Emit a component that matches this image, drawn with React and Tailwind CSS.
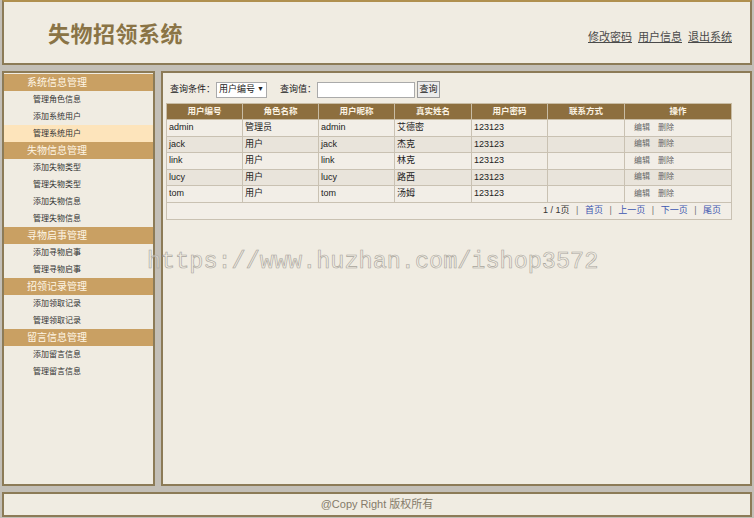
import React from 'react';

const MENU = [
  { title: '系统信息管理', items: ['管理角色信息', '添加系统用户', '管理系统用户'] },
  { title: '失物信息管理', items: ['添加失物类型', '管理失物类型', '添加失物信息', '管理失物信息'] },
  { title: '寻物启事管理', items: ['添加寻物启事', '管理寻物启事'] },
  { title: '招领记录管理', items: ['添加领取记录', '管理领取记录'] },
  { title: '留言信息管理', items: ['添加留言信息', '管理留言信息'] },
];

const COLS = ['用户编号', '角色名称', '用户昵称', '真实姓名', '用户密码', '联系方式', '操作'];

const USERS = [
  ['admin', '管理员', 'admin', '艾德密', '123123'],
  ['jack', '用户', 'jack', '杰克', '123123'],
  ['link', '用户', 'link', '林克', '123123'],
  ['lucy', '用户', 'lucy', '路西', '123123'],
  ['tom', '用户', 'tom', '汤姆', '123123'],
];

const font = "font-['Liberation_Sans','Noto_Sans_CJK_SC',sans-serif]";

function Sidebar() {
  return (
    <div className="w-[153px] shrink-0 border-2 border-[#8c7b57] bg-[#f0ece2] pt-px">
      {MENU.map((group) => (
        <div key={group.title}>
          <div className="h-[17px] bg-[#c9a063] pl-[23px] text-[10px] leading-[17px] text-[#fff6e6]">
            {group.title}
          </div>
          {group.items.map((item) => (
            <div
              key={item}
              className={`h-[17px] pl-[29px] text-[8px] leading-[17px] text-[#333] ${
                item === '管理系统用户' ? 'bg-[#fde4bb]' : ''
              }`}
            >
              {item}
            </div>
          ))}
        </div>
      ))}
    </div>
  );
}

function Sep() {
  return <span className="mx-[6.5px] text-[#777]">|</span>;
}

function UserTable() {
  return (
    <table className="w-[565px] table-fixed border-collapse text-[9px] text-[#222]">
      <colgroup>
        <col className="w-[76px]" />
        <col className="w-[76px]" />
        <col className="w-[76px]" />
        <col className="w-[77px]" />
        <col className="w-[76px]" />
        <col className="w-[77px]" />
        <col className="w-[107px]" />
      </colgroup>
      <thead>
        <tr className="h-[16px] bg-[#8d6f3f]">
          {COLS.map((c) => (
            <th key={c} className="border border-[#c8bca4] p-0 text-center text-[8.5px] font-bold text-[#fbf3e3]">
              {c}
            </th>
          ))}
        </tr>
      </thead>
      <tbody>
        {USERS.map((row, i) => (
          <tr key={row[0]} className={`h-[16.5px] ${i % 2 ? 'bg-[#e9e4db]' : 'bg-[#f2eee7]'}`}>
            {row.map((cell, j) => (
              <td key={j} className="border border-[#c9c1b2] px-[2px] py-0 text-left">
                {cell}
              </td>
            ))}
            <td className="border border-[#c9c1b2] px-[2px] py-0" />
            <td className="border border-[#c9c1b2] py-0 pl-[9px] text-[8px] text-[#666]">
              <span>编辑</span>
              <span className="ml-[8px]">删除</span>
            </td>
          </tr>
        ))}
        <tr className="h-[17px] bg-[#f2eee7]">
          <td colSpan={7} className="border border-[#c9c1b2] p-0 pr-[10px] text-right text-[9px] text-[#333]">
            1 / 1页
            <Sep />
            <a className="text-[#3d56b0]">首页</a>
            <Sep />
            <a className="text-[#3d56b0]">上一页</a>
            <Sep />
            <a className="text-[#3d56b0]">下一页</a>
            <Sep />
            <a className="text-[#3d56b0]">尾页</a>
          </td>
        </tr>
      </tbody>
    </table>
  );
}

export default function App() {
  return (
    <div className={`relative h-[518px] w-[754px] overflow-hidden bg-[#c3bfb7] px-[2px] ${font}`}>
      {/* header */}
      <div className="flex h-[65px] items-center justify-between border-2 border-[#8c7b57] border-t-[#b0904f] bg-[#f0ece2]">
        <h1 className="ml-[44px] mt-[3px] text-[22px] font-bold tracking-[0.5px] text-[#8a7446]">失物招领系统</h1>
        <div className="mr-[18px] mt-[9px] flex gap-[6px] text-[11px] text-[#4a4a4a]">
          <a className="underline">修改密码</a>
          <a className="underline">用户信息</a>
          <a className="underline">退出系统</a>
        </div>
      </div>

      {/* body */}
      <div className="mt-[6px] flex h-[415px] gap-[6px]">
        <Sidebar />
        <div className="flex-1 border-2 border-[#8c7b57] bg-[#f0ece2] px-[3px] pt-[8px]">
          <div className="ml-[4px] flex h-[17px] items-center text-[9px] text-[#222]">
            <span>查询条件：</span>
            <div className="ml-[1px] flex h-[16px] w-[51px] items-center justify-between border border-[#aaa] bg-white px-[2px]">
              <span>用户编号</span>
              <span className="text-[7px]">▼</span>
            </div>
            <span className="ml-[13px]">查询值：</span>
            <div className="ml-[1px] h-[16px] w-[98px] border border-[#aaa] bg-white" />
            <div className="ml-[2px] flex h-[17px] w-[23px] items-center justify-center border border-[#999] bg-[#ebebeb]">
              查询
            </div>
          </div>
          <div className="mt-[5px]">
            <UserTable />
          </div>
        </div>
      </div>

      {/* footer */}
      <div className="mt-[6px] flex h-[25px] items-center justify-center border-2 border-[#8c7b57] bg-[#f0ece2] text-[11px] text-[#857b6a]">
        @Copy Right 版权所有
      </div>

      {/* watermark */}
      <div className="pointer-events-none absolute left-[147px] top-[247px] font-['Liberation_Mono',monospace] text-[23.5px] leading-[30px] text-[#f0ece2]/40 [-webkit-text-stroke:0.6px_#a8a49c]">
        https://www.huzhan.com/ishop3572
      </div>
    </div>
  );
}
